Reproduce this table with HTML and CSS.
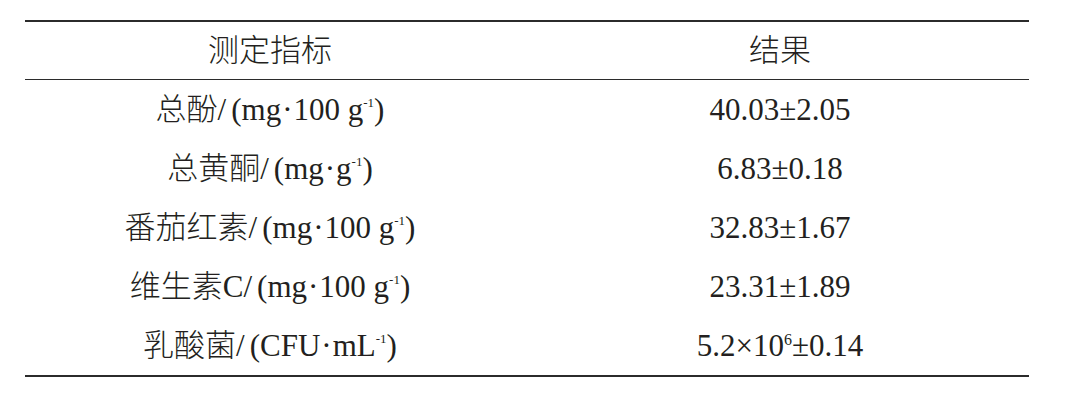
FILE: index.html
```html
<!DOCTYPE html>
<html lang="zh-CN">
<head>
    <meta charset="UTF-8">
    <title>测定指标</title>
    <link rel="stylesheet" href="styles.css">
</head>
<body>
    <div class="page">
        <table class="data-table">
            <thead>
                <tr>
                    <th class="col-name">测定指标</th>
                    <th class="col-value">结果</th>
                </tr>
            </thead>
            <tbody>
                <tr>
                    <td class="col-name">总酚/<span class="paren">(</span>mg<span class="dot">·</span>100 g<sup>-1</sup>)</td>
                    <td class="col-value">40.03±2.05</td>
                </tr>
                <tr>
                    <td class="col-name">总黄酮/<span class="paren">(</span>mg<span class="dot">·</span>g<sup>-1</sup>)</td>
                    <td class="col-value">6.83±0.18</td>
                </tr>
                <tr>
                    <td class="col-name">番茄红素/<span class="paren">(</span>mg<span class="dot">·</span>100 g<sup>-1</sup>)</td>
                    <td class="col-value">32.83±1.67</td>
                </tr>
                <tr>
                    <td class="col-name">维生素C/<span class="paren">(</span>mg<span class="dot">·</span>100 g<sup>-1</sup>)</td>
                    <td class="col-value">23.31±1.89</td>
                </tr>
                <tr>
                    <td class="col-name">乳酸菌/<span class="paren">(</span>CFU<span class="dot">·</span>mL<sup>-1</sup>)</td>
                    <td class="col-value">5.2×10<sup class="exp">6</sup>±0.14</td>
                </tr>
            </tbody>
        </table>
    </div>
</body>
</html>
```

FILE: styles.css
```css
body {
    margin: 0;
    background-color: #fff;
    font-family: "Liberation Serif", "Noto Sans CJK SC", serif;
    color: #231f20;
}

.page {
    padding: 20px 43px 0 25px;
}

.data-table {
    width: 1004px;
    border-collapse: collapse;
    border-top: 2px solid #2b2b2b;
    border-bottom: 2px solid #2b2b2b;
}

.data-table th,
.data-table td {
    padding: 0;
    text-align: center;
    font-weight: 300;
    font-size: 31px;
    line-height: 1;
}

.data-table thead th {
    height: 57px;
    border-bottom: 1px solid #2b2b2b;
}

.data-table tbody td {
    height: 59px;
}

.col-name {
    width: 490px;
}

.col-value {
    padding-left: 16px !important;
}

.paren {
    padding-left: 5px;
}

.dot {
    padding: 0 1px;
}

sup {
    font-size: 13px;
    vertical-align: 13px;
    line-height: 0;
}

sup.exp {
    font-size: 16px;
    vertical-align: 11px;
}
```
